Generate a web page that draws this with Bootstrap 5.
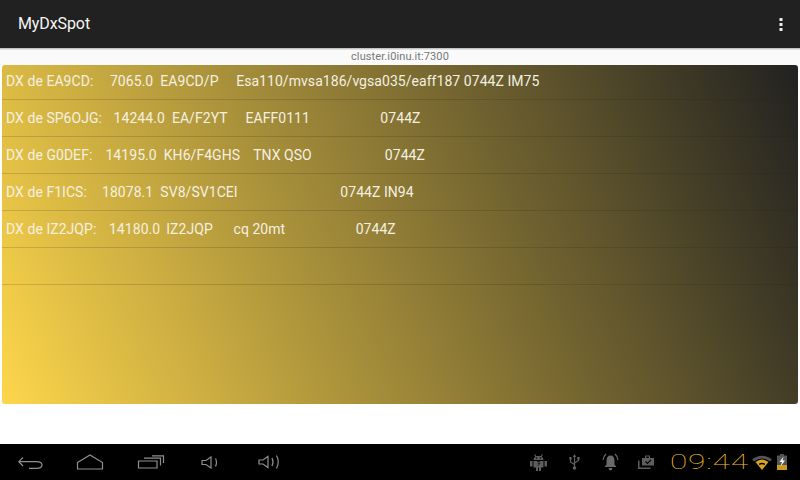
<!DOCTYPE html>
<html lang="en">
<head>
<meta charset="utf-8">
<title>MyDxSpot</title>
<link href="https://cdn.jsdelivr.net/npm/bootstrap@5.3.0/dist/css/bootstrap.min.css" rel="stylesheet">
<style>
html,body{height:480px;overflow:hidden;background:#fff;font-family:Roboto,"Liberation Sans",sans-serif}
.app-frame{height:480px}
.action-bar{height:48px;background:#212121;padding:0 18px;color:#f5f5f5;font-size:16px;font-weight:400;letter-spacing:-.1px}
.overflow-dots{margin-right:-1px}
.bar-shadow{height:2px;background:linear-gradient(#b4b4b4,#f0f0f0)}
.server-line{height:15px;background:#fafafa;font-size:11px;line-height:14px;color:#777;letter-spacing:.1px}
.server-line span{margin-left:351px}
.spot-panel{height:339px;margin:0 2px;border-radius:3px;background:linear-gradient(66.9deg,#fdd64b,#212120)}
.spot-row{height:37px;border-bottom:1px solid rgba(40,30,10,.17);padding:0 4px;font-size:14px;line-height:36px;color:#f4f0e0;white-space:pre;letter-spacing:.05px}
.spot-row:first-child{height:35px;line-height:33px}
.nudge-p1{margin-left:1px}
.nudge-p2{margin-left:2px}
.nudge-m1{margin-left:-1px}
.nudge-m3{margin-left:-3px}
.nudge-m4{margin-left:-4px}
.body-fill{flex:1;background:#fff}
.nav-bar{height:36px;background:#000;padding-left:18px;padding-right:13px}
.nav-ico{display:block;flex:none}
.ml-home,.ml-recent{margin-left:33px}
.ml-vol1{margin-left:36px}
.ml-vol2{margin-left:39px}
.ml-usb,.ml-bell{margin-left:22px}
.ml-clip{margin-left:19px}
.ml-wifi{margin-left:3px}
.ml-batt{margin-left:5px}
.clock{display:block;margin-left:16px;width:79px;color:#f5bb25;font-size:20px;font-weight:100;line-height:34px;letter-spacing:.5px;white-space:nowrap;transform:scaleX(1.58);transform-origin:0 50%}
</style>
</head>
<body>
<div class="app-frame d-flex flex-column">
  <div class="action-bar d-flex align-items-center justify-content-between">
    <span>MyDxSpot</span>
    <svg class="overflow-dots" width="4" height="13" viewBox="0 0 4 13"><rect x="0.5" y="0" width="3" height="3" fill="#eee"/><rect x="0.5" y="5" width="3" height="3" fill="#eee"/><rect x="0.5" y="10" width="3" height="3" fill="#eee"/></svg>
  </div>
  <div class="bar-shadow"></div>
  <div class="server-line"><span>cluster.i0inu.it:7300</span></div>
  <div class="spot-panel">
    <div class="spot-row">DX de EA9CD:     <span class="nudge-m1">7065.0</span>  EA9CD/P     Esa110/mvsa186/vgsa035/eaff187 0744Z IM75</div>
    <div class="spot-row">DX de SP6OJG:   <span class="nudge-p1">14244.0</span>  EA/F2YT      <span class="nudge-m3">EAFF0111</span>                    0744Z</div>
    <div class="spot-row">DX de G0DEF:    <span class="nudge-m1">14195.0</span>  KH6/F4GHS    <span class="nudge-m1">TNX QSO</span>                     <span class="nudge-m1">0744Z</span></div>
    <div class="spot-row">DX de F1ICS:    <span class="nudge-p1">18078.1</span>  SV8/SV1CEI                              <span class="nudge-m3">0744Z IN94</span></div>
    <div class="spot-row">DX de IZ2JQP:   <span class="nudge-p2">14180.0</span>  <span class="nudge-m1">IZ2JQP</span>       <span class="nudge-m4">cq 20mt</span>                    0744Z</div>
    <div class="spot-row"></div>
  </div>
  <div class="body-fill"></div>
  <div class="nav-bar d-flex align-items-center justify-content-between">
    <div class="d-flex align-items-center">
      <svg class="nav-ico" width="25" height="14" viewBox="0 0 25 14" fill="none" stroke="#8f8f8f" stroke-width="1.2"><path d="M5 2.500 .8 6.700 5 11M.8 6.700H18.500Q24 6.700 24 10T18.500 13.300H11"/></svg>
      <svg class="nav-ico ml-home" width="28" height="16" viewBox="0 0 28 16" fill="none" stroke="#8f8f8f" stroke-width="1.2"><path d="M1.500 8.500 14 1 26.500 8.500V15H1.500Z"/></svg>
      <svg class="nav-ico ml-recent" width="28" height="14" viewBox="0 0 28 14" fill="none" stroke="#8f8f8f" stroke-width="1.2"><path d="M1.500 6H20V13H1.500ZM7 3.200H23.500V10.500M15 .8H26.500V8"/></svg>
      <svg class="nav-ico ml-vol1" width="18" height="13" viewBox="0 0 18 13" fill="none" stroke="#8f8f8f" stroke-width="1.2"><path d="M1 4.500H5L10 1V12L5 8.500H1ZM14.500 2.500Q16.500 6.500 14.500 10.500"/></svg>
      <svg class="nav-ico ml-vol2" width="23" height="16" viewBox="0 0 23 16" fill="none" stroke="#8f8f8f" stroke-width="1.2"><path d="M1 6H5L10 2.500V13.500L5 10H1ZM14 4Q16 8 14 12M18.500 1.500Q22 8 18.500 14.500"/></svg>
    </div>
    <div class="d-flex align-items-center">
      <svg class="nav-ico" width="17" height="18" viewBox="0 0 17 18"><path d="M5 1 6.200 3H10.800L12 1 12.800 1.500 11.800 3.500Q13.500 5 13.500 7H3.500Q3.500 5 5.200 3.500L4.200 1.500Z" fill="#5e5e5e"/><path d="M0 8H2.500V13.500H0ZM14.500 8H17V13.500H14.500ZM3.500 8H13.500V14.500H11V18H9V14.500H8V18H6V14.500H3.500Z" fill="#5e5e5e"/><path d="M7 8.500H10L8 10.500H10L7.500 13" fill="none" stroke="#222" stroke-width="1"/><circle cx="6.500" cy="5" r=".8" fill="#000"/><circle cx="10.500" cy="5" r=".8" fill="#000"/></svg>
      <svg class="nav-ico ml-usb" width="11" height="16" viewBox="0 0 11 16" fill="none" stroke="#606060" stroke-width="1.2"><path d="M5.500 2V14M5.500 10.500 1.500 8V5M5.500 9 9.500 6.500V5"/><path d="M5.500 0 3.800 3H7.200Z" fill="#606060" stroke="none"/><path d="M.3 3H2.700V5.500H.3ZM8.300 3H10.700V5.500H8.300Z" fill="#606060" stroke="none"/><circle cx="5.500" cy="14" r="1.800" fill="#606060" stroke="none"/></svg>
      <svg class="nav-ico ml-bell" width="17" height="18" viewBox="0 0 17 18" fill="#6a6a6a"><path d="M8.500 2.500Q12.500 2.500 12.500 8V11.500L14.500 14H2.500L4.500 11.500V8Q4.500 2.500 8.500 2.500ZM6.500 15H10.500Q10 17.500 8.500 17.500T6.500 15Z"/><path d="M4 1Q1.200 3.500 1 7M13 1Q15.800 3.500 16 7" fill="none" stroke="#6a6a6a" stroke-width="1.200"/></svg>
      <svg class="nav-ico ml-clip" width="16" height="14" viewBox="0 0 16 14"><path d="M4 3H7V.5H12V3H16V10.500H4Z" fill="#5e5e5e"/><path d="M8.200 1.500H10.800V3H8.200Z" fill="#000"/><path d="M.8 5.500V13.200H12.500" fill="none" stroke="#5e5e5e" stroke-width="1.500"/><path d="M7.500 6.500 9.500 8.500 13 5" fill="none" stroke="#000" stroke-width="1.200"/></svg>
      <span class="clock">09:44</span>
      <svg class="nav-ico ml-wifi" width="20" height="15" viewBox="0 0 20 15"><path d="M0 4.500Q10 -3 20 4.500L18 6.500Q10 .500 2 6.500Z" fill="#555"/><path d="M3.500 7Q10 2 16.500 7L10 15Z" fill="#d9a520"/><path d="M6.800 8.800Q10 6.800 13.200 8.800L12.500 10Q10 8.500 7.500 10Z" fill="#000"/></svg>
      <svg class="nav-ico ml-batt" width="10" height="16" viewBox="0 0 10 16"><path d="M3 0H7V1.500H10V16H0V1.500H3Z" fill="#555"/><path d="M0 11H10V16H0Z" fill="#c99c20"/><path d="M6.500 2.500 2.500 8H5L3.500 12.500 8 6.500H5.500Z" fill="#fff"/></svg>
    </div>
  </div>
</div>
<script src="https://cdn.jsdelivr.net/npm/bootstrap@5.3.0/dist/js/bootstrap.bundle.min.js"></script>
</body>
</html>
